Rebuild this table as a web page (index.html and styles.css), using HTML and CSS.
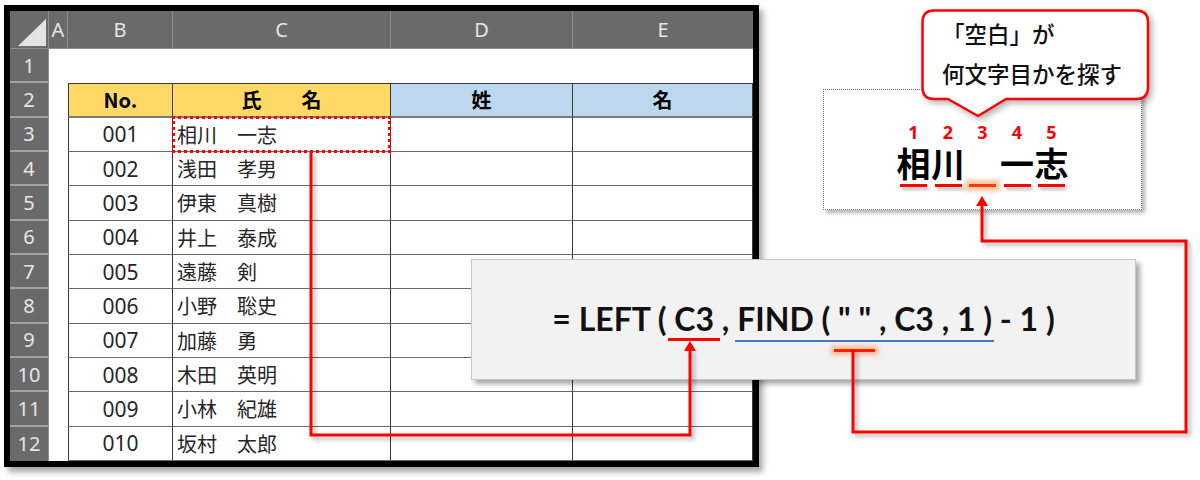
FILE: index.html
```html
<!DOCTYPE html>
<html lang="ja">
<head>
<meta charset="utf-8">
<title>LEFT FIND</title>
<link rel="stylesheet" href="styles.css">
</head>
<body>
<div class="stage">
  <div class="excel">
    <div class="sheet">
      <div class="corner"><svg width="39" height="38" viewBox="0 0 39 38"><polygon points="8,35 36,8 36,35" fill="#e3e3e3"/></svg></div>
      <div class="colh">A</div><div class="colh">B</div><div class="colh">C</div><div class="colh">D</div><div class="colh last">E</div>

      <div class="rowh">1</div><div class="a"></div><div class="blank"></div><div class="blank"></div><div class="blank"></div><div class="blank"></div>

      <div class="rowh">2</div><div class="a"></div>
      <div class="c hd yel first top">No.</div><div class="c hd yel top">氏　　名</div><div class="c hd blu top">姓</div><div class="c hd blu top">名</div>

      <div class="rowh">3</div><div class="a"></div><div class="c num first">001</div><div class="c name">相川　一志</div><div class="c"></div><div class="c"></div>
      <div class="rowh">4</div><div class="a"></div><div class="c num first">002</div><div class="c name">浅田　孝男</div><div class="c"></div><div class="c"></div>
      <div class="rowh">5</div><div class="a"></div><div class="c num first">003</div><div class="c name">伊東　真樹</div><div class="c"></div><div class="c"></div>
      <div class="rowh">6</div><div class="a"></div><div class="c num first">004</div><div class="c name">井上　泰成</div><div class="c"></div><div class="c"></div>
      <div class="rowh">7</div><div class="a"></div><div class="c num first">005</div><div class="c name">遠藤　剣</div><div class="c"></div><div class="c"></div>
      <div class="rowh">8</div><div class="a"></div><div class="c num first">006</div><div class="c name">小野　聡史</div><div class="c"></div><div class="c"></div>
      <div class="rowh">9</div><div class="a"></div><div class="c num first">007</div><div class="c name">加藤　勇</div><div class="c"></div><div class="c"></div>
      <div class="rowh">10</div><div class="a"></div><div class="c num first">008</div><div class="c name">木田　英明</div><div class="c"></div><div class="c"></div>
      <div class="rowh">11</div><div class="a"></div><div class="c num first">009</div><div class="c name">小林　紀雄</div><div class="c"></div><div class="c"></div>
      <div class="rowh lastrow">12</div><div class="a"></div><div class="c num first">010</div><div class="c name">坂村　太郎</div><div class="c"></div><div class="c"></div>
    </div>
  </div>

  <div class="sel"></div>

  <div class="formula">
    <span>= LEFT (&nbsp;</span><span class="u-red">C3</span><span>&nbsp;,&nbsp;</span><span class="u-blue">FIND (&nbsp;<span class="u-quote">"&nbsp;"</span>&nbsp;, C3 , 1 )</span><span>&nbsp;- 1 )</span>
  </div>

  <div class="demo">
    <div class="nums"><span>1</span><span>2</span><span>3</span><span>4</span><span>5</span></div>
    <div class="big"><span>相</span><span>川</span><span>　</span><span>一</span><span>志</span></div>
    <div class="dashes"><span></span><span></span><span class="hot"></span><span></span><span></span></div>
  </div>

  <div class="bubble">
    <svg class="bubble-shape" width="240" height="120" viewBox="0 0 240 120">
      <path d="M13 1.5 H215 Q227 1.5 227 13.5 V78 Q227 90 215 90 H85 L57 107 L27 90 H13 Q1.5 90 1.5 78 V13.5 Q1.5 1.5 13 1.5 Z" fill="#fff" stroke="#ff0000" stroke-width="2.5" stroke-linejoin="round"/>
    </svg>
    <div class="bubble-text">
      <div>「空白」が</div>
      <div>何文字目かを探す</div>
    </div>
  </div>

  <svg class="wires" width="1200" height="480" viewBox="0 0 1200 480">
    <defs>
      <filter id="sh" x="-10%" y="-10%" width="130%" height="130%">
        <feDropShadow dx="3" dy="3" stdDeviation="2" flood-color="#000" flood-opacity="0.3"/>
      </filter>
    </defs>
    <g filter="url(#sh)" fill="none" stroke="#ff0000" stroke-width="3">
      <path d="M311 152 V435 H690 V349"/>
      <path d="M853 350 V432 H1186 V241 H982 V205"/>
    </g>
    <g fill="#ff0000">
      <polygon points="690,341 684,351 696,351"/>
      <polygon points="982,196 976,206 988,206"/>
    </g>
  </svg>
</div>
</body>
</html>
```

FILE: styles.css
```css
* { box-sizing: border-box; }
html, body { margin: 0; padding: 0; background: #fff; }
body { width: 1200px; height: 480px; overflow: hidden; font-family: "Noto Sans CJK JP", "Noto Sans", sans-serif; }
.stage { position: relative; width: 1200px; height: 480px; padding: 5px 0 0 4px; }

.excel {
  width: 755px;
  height: 462px;
  border: 6px solid #000;
  box-shadow: 4px 5px 6px rgba(0,0,0,0.35);
  background: #fff;
}
.sheet {
  display: grid;
  grid-template-columns: 39px 19px 105px 218px 182px 180px;
  grid-template-rows: 38px repeat(12, 1fr);
  height: 450px;
}
.corner { background: #6a6a6a; border-right: 1px solid #8e8e8e; border-bottom: 1px solid #8e8e8e; }
.corner svg { display: block; }
.colh {
  background: #6a6a6a;
  color: #e6e6e6;
  font-family: "Noto Sans", "Liberation Sans", sans-serif;
  font-size: 20px;
  display: flex; align-items: center; justify-content: center;
  border-right: 1px solid #8e8e8e;
  border-bottom: 1px solid #8e8e8e;
}
.colh.last { border-right: none; }
.rowh {
  background: #6a6a6a;
  color: #e6e6e6;
  font-family: "Noto Sans", "Liberation Sans", sans-serif;
  font-size: 20px;
  display: flex; align-items: center; justify-content: center;
  border-bottom: 2px solid #a3a3a3;
  border-right: 1px solid #8e8e8e;
}
.rowh.lastrow { border-bottom: none; }
.a, .blank { background: #fff; }

.c {
  background: #fff;
  border-right: 1px solid #3a3a3a;
  border-bottom: 1px solid #6a6a6a;
  display: flex; align-items: center;
  font-size: 20px;
  color: #262626;
}
.c.first { border-left: 1px solid #3a3a3a; }
.c.top { border-top: 1px solid #3a3a3a; border-bottom: 2px solid #7a7a7a; }
.c.hd { justify-content: center; font-weight: 700; color: #000; font-size: 20px; }
.yel { background: #ffd966; }
.blu { background: #bdd7ee; }
.num { justify-content: center; font-family: "Noto Sans", "Noto Sans CJK JP", sans-serif; font-size: 21px; }
.name { padding-left: 4px; }

.sel {
  position: absolute;
  left: 172px; top: 116px;
  width: 219px; height: 37px;
  border: 3px dotted #ff0000;
}

.formula {
  position: absolute;
  left: 471px; top: 259px;
  width: 665px; height: 121px;
  background: #f2f2f2;
  border: 1px solid #c6c6c6;
  box-shadow: 4px 4px 5px rgba(0,0,0,0.35);
  display: flex; justify-content: center; align-items: center;
  padding: 0 0 2px 0;
  font-family: "Lato", "Open Sans", sans-serif;
  font-weight: 700;
  font-size: 32px;
  color: #111;
  white-space: nowrap;
}
.formula span { position: relative; }
.u-red::after {
  content: ""; position: absolute;
  left: -6px; right: -6px; bottom: -3px;
  height: 3px; background: #ff0000;
}
.u-blue::after {
  content: ""; position: absolute;
  left: -2px; right: -2px; bottom: -4px;
  height: 2.5px; background: #4472c4;
}
.u-quote::after {
  content: ""; position: absolute;
  left: -4px; right: -4px; bottom: -14px;
  height: 3px; background: #ff1a00;
  box-shadow: 0 0 4px 3px rgba(240, 140, 70, 0.55);
}

.demo {
  position: absolute;
  left: 823px; top: 89px;
  width: 319px; height: 121px;
  background: #fff;
  border: 1px dotted #777;
  box-shadow: 3px 3px 4px rgba(0,0,0,0.3);
  display: flex; flex-direction: column; align-items: center;
  padding-top: 32px;
}
.nums, .big, .dashes { display: flex; }
.nums { margin-bottom: 3px; }
.nums span {
  width: 34.5px; text-align: center;
  color: #ff0000; font-weight: 700; font-size: 18px;
  font-family: "Open Sans", "Noto Sans", sans-serif;
  line-height: 20px;
}
.big span {
  width: 34.5px; text-align: center;
  font-size: 34px; font-weight: 700; line-height: 36px; color: #000;
}
.dashes { margin-top: 3px; }
.dashes span {
  width: 34.5px; height: 3px;
  display: flex; justify-content: center;
}
.dashes span::after {
  content: ""; width: 27px; height: 3px; background: #ff0000;
  box-shadow: 2px 3px 3px rgba(0,0,0,0.25);
}
.dashes span.hot::after {
  background: #ff3a10;
  box-shadow: 0 0 4px 4px rgba(240, 150, 80, 0.55);
}

.bubble {
  position: absolute;
  left: 921px; top: 9px;
  width: 240px; height: 120px;
}
.bubble-shape {
  position: absolute; left: 0; top: 0;
  filter: drop-shadow(3px 3px 3px rgba(0,0,0,0.3));
}
.bubble-text {
  position: relative;
  padding: 4px 0 0 21px;
  font-size: 22.5px;
  font-weight: 500;
  line-height: 40px;
  color: #111;
}

.wires { position: absolute; left: 0; top: 0; pointer-events: none; }
```
